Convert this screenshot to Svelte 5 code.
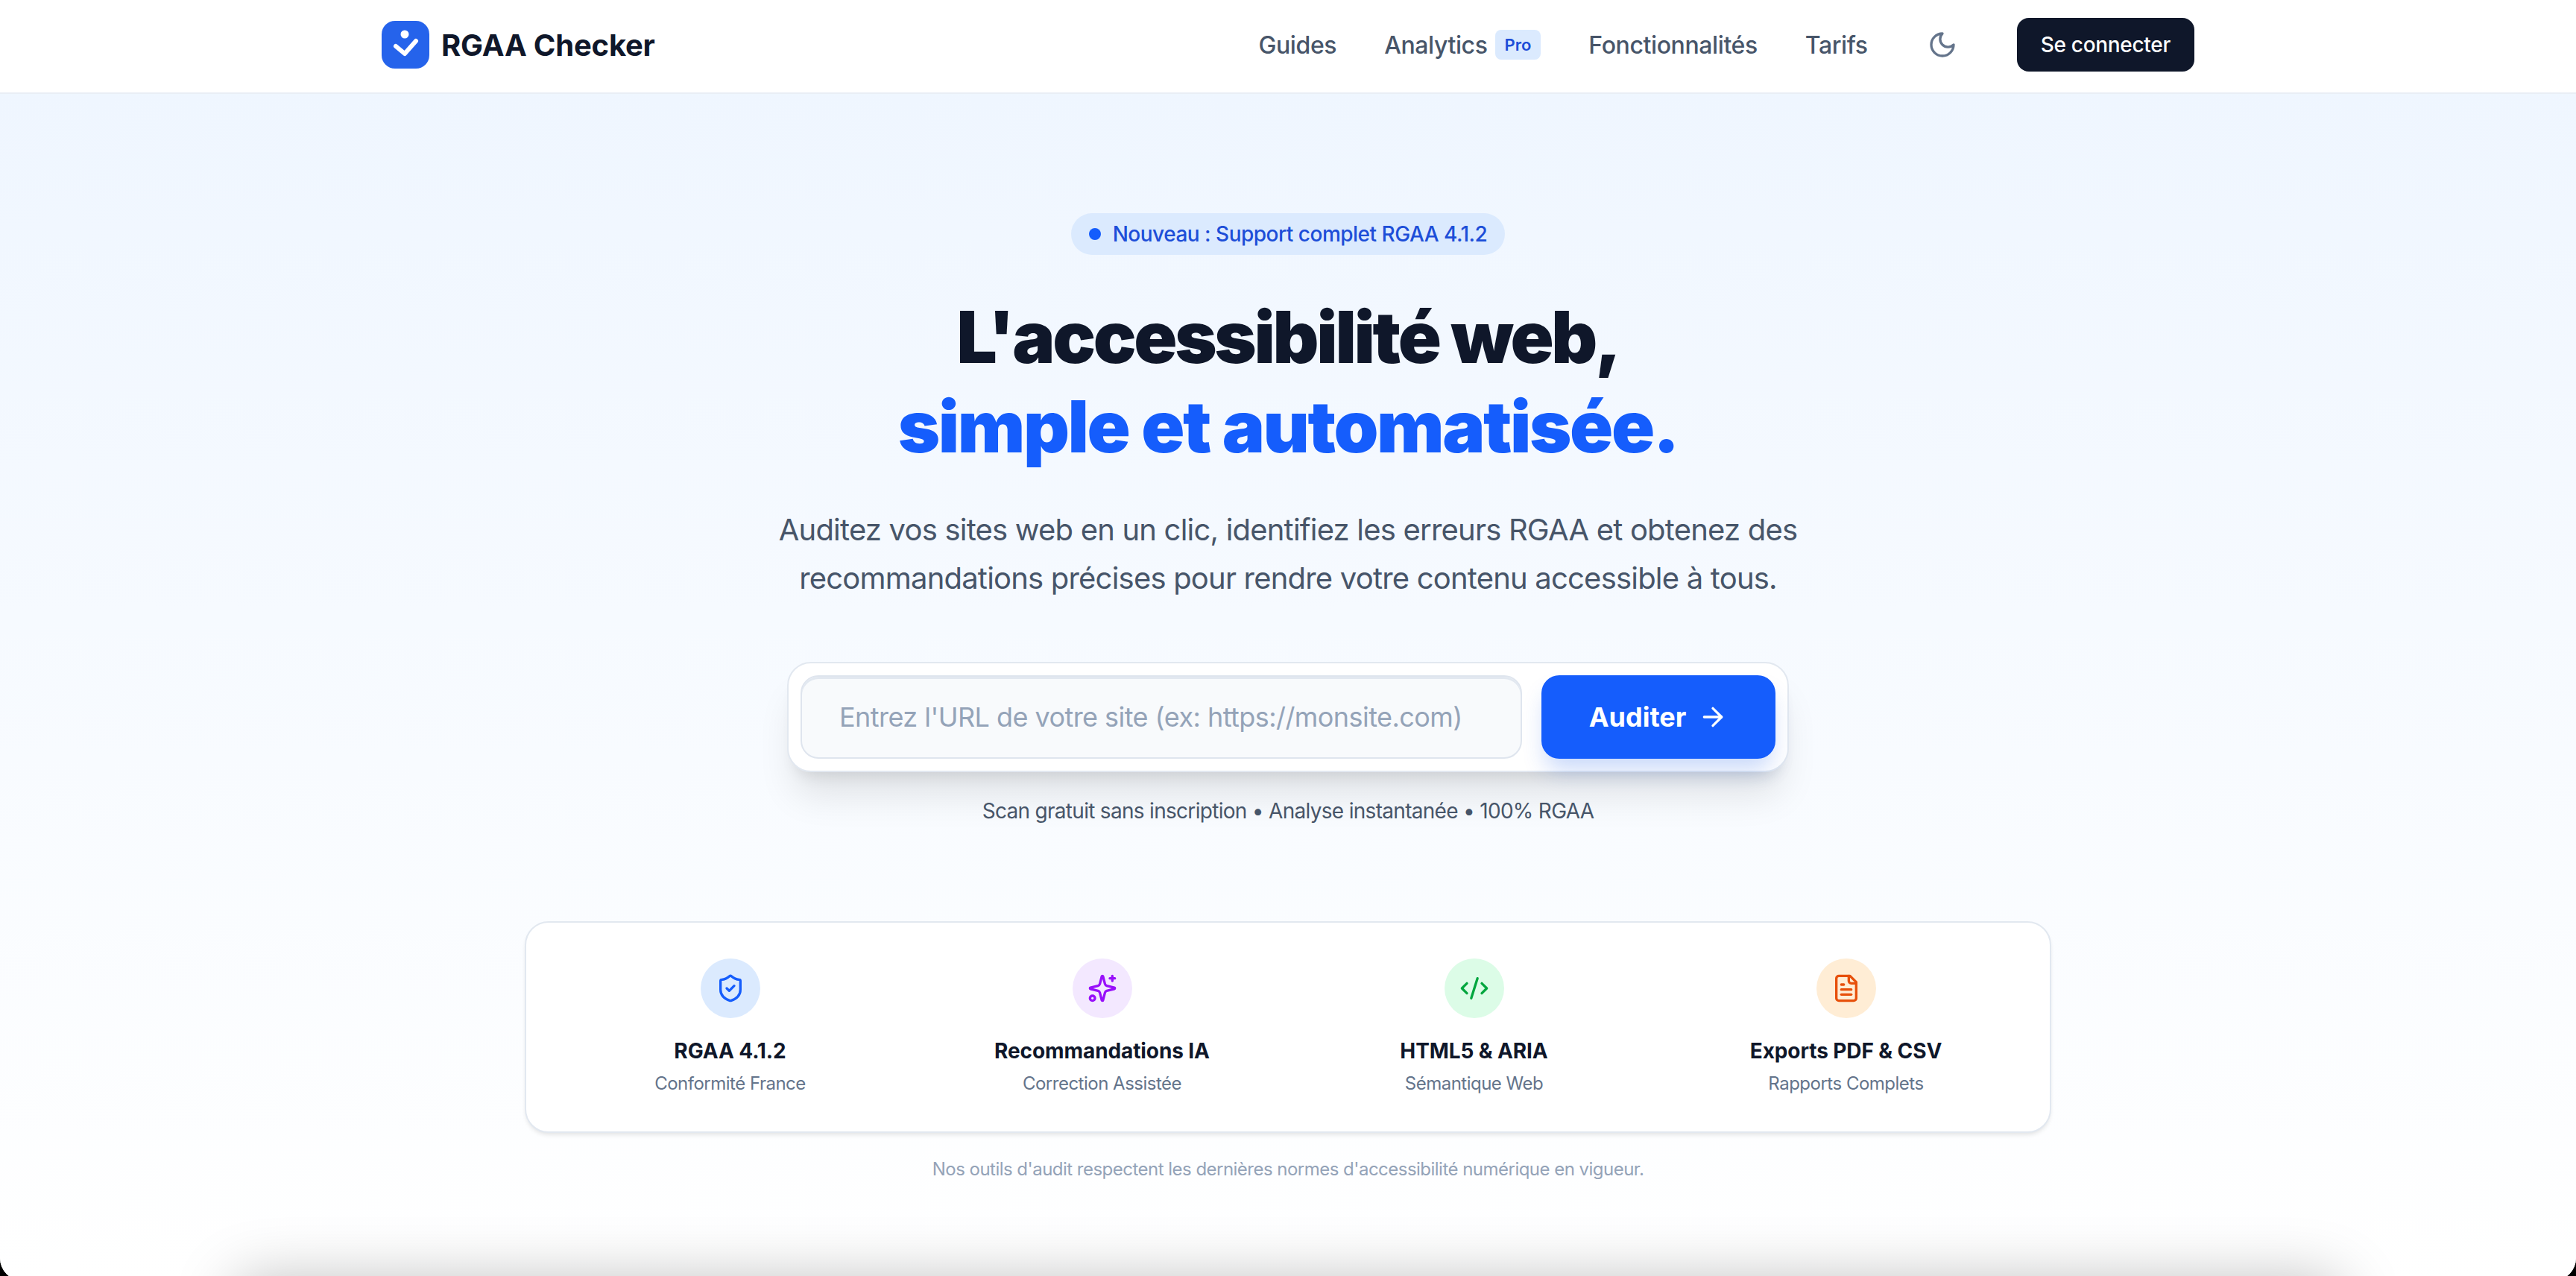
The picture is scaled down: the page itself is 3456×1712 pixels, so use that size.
<script lang="ts">
  const links = ["Guides", "Analytics", "Fonctionnalités", "Tarifs"];
  const features = [
    { title: "RGAA 4.1.2", sub: "Conformité France", kind: "blue" },
    { title: "Recommandations IA", sub: "Correction Assistée", kind: "purple" },
    { title: "HTML5 & ARIA", sub: "Sémantique Web", kind: "green" },
    { title: "Exports PDF & CSV", sub: "Rapports Complets", kind: "orange" },
  ];
</script>

<div class="frame">
  <div class="page">
    <header class="topbar">
      <div class="topbar-inner">
        <a class="brand" href="#top">
          <span class="brand-mark">
            <svg viewBox="0 0 64 64" width="64" height="64" aria-hidden="true">
              <circle cx="31" cy="18" r="5.5" fill="#fff" />
              <path d="M19 34l12 10 15-17" fill="none" stroke="#fff" stroke-width="6" stroke-linecap="round" stroke-linejoin="round" />
            </svg>
          </span>
          <span class="brand-name">RGAA Checker</span>
        </a>
        <nav class="nav">
          {#each links as link}
            <a href="#top" class="nav-link">
              {link}
              {#if link === "Analytics"}<span class="pro">Pro</span>{/if}
            </a>
          {/each}
          <button class="theme" aria-label="Thème sombre">
            <svg viewBox="0 0 24 24" width="40" height="40" fill="none" stroke="#64748b" stroke-width="2" stroke-linecap="round" stroke-linejoin="round" aria-hidden="true">
              <path d="M12 3a6 6 0 0 0 9 9 9 9 0 1 1-9-9Z" />
            </svg>
          </button>
          <button class="login">Se connecter</button>
        </nav>
      </div>
    </header>

    <main class="hero">
      <div class="tag"><span class="dot"></span>Nouveau : Support complet RGAA 4.1.2</div>
      <h1>L'accessibilité web,<br /><span class="accent">simple et automatisée.</span></h1>
      <p class="lead">Auditez vos sites web en un clic, identifiez les erreurs RGAA et obtenez des<br />recommandations précises pour rendre votre contenu accessible à tous.</p>

      <form class="scan" onsubmit={(e) => e.preventDefault()}>
        <input type="text" placeholder="Entrez l'URL de votre site (ex: https://monsite.com)" />
        <button class="go">
          Auditer
          <svg viewBox="0 0 24 24" width="40" height="40" fill="none" stroke="#fff" stroke-width="2" stroke-linecap="round" stroke-linejoin="round" aria-hidden="true">
            <path d="M5 12h14" />
            <path d="m12 5 7 7-7 7" />
          </svg>
        </button>
      </form>
      <p class="hint">Scan gratuit sans inscription • Analyse instantanée • 100% RGAA</p>

      <section class="features">
        {#each features as f}
          <div class="feature">
            <span class="bubble {f.kind}">
              <svg viewBox="0 0 24 24" width="40" height="40" fill="none" stroke="currentColor" stroke-width="2" stroke-linecap="round" stroke-linejoin="round" aria-hidden="true">
                {#if f.kind === "blue"}
                  <path d="M20 13c0 5-3.500 7.500-7.660 8.950a1 1 0 0 1-.67-.01C7.500 20.500 4 18 4 13V6a1 1 0 0 1 1-1c2 0 4.500-1.200 6.240-2.720a1.170 1.170 0 0 1 1.520 0C14.510 3.810 17 5 19 5a1 1 0 0 1 1 1z" />
                  <path d="m9 12 2 2 4-4" />
                {:else if f.kind === "purple"}
                  <path d="M9.937 15.500A2 2 0 0 0 8.500 14.063l-6.135-1.582a.5.5 0 0 1 0-.962L8.500 9.936A2 2 0 0 0 9.937 8.500l1.582-6.135a.5.5 0 0 1 .963 0L14.063 8.500A2 2 0 0 0 15.500 9.937l6.135 1.581a.5.5 0 0 1 0 .964L15.500 14.063a2 2 0 0 0-1.437 1.437l-1.582 6.135a.5.5 0 0 1-.963 0z" />
                  <path d="M20 2v4" />
                  <path d="M22 4h-4" />
                  <circle cx="4" cy="20" r="2" />
                {:else if f.kind === "green"}
                  <path d="m18 16 4-4-4-4" />
                  <path d="m6 8-4 4 4 4" />
                  <path d="m14.500 4-5 16" />
                {:else}
                  <path d="M15 2H6a2 2 0 0 0-2 2v16a2 2 0 0 0 2 2h12a2 2 0 0 0 2-2V7Z" />
                  <path d="M14 2v4a2 2 0 0 0 2 2h4" />
                  <path d="M10 9H8" />
                  <path d="M16 13H8" />
                  <path d="M16 17H8" />
                {/if}
              </svg>
            </span>
            <strong>{f.title}</strong>
            <span class="sub">{f.sub}</span>
          </div>
        {/each}
      </section>
      <p class="note">Nos outils d'audit respectent les dernières normes d'accessibilité numérique en vigueur.</p>

      <div class="next-card"></div>
    </main>
  </div>
</div>

<style>
  :global(body) {
    margin: 0;
    background: #000;
    font-family: Inter, "Liberation Sans", sans-serif;
  }
  /* the capture has rounded bottom corners on black */
  .frame {
    height: 1712px;
    overflow: hidden;
    background: #000;
  }
  .page {
    height: 1718px;
    overflow: hidden;
    background: #fff;
    border-radius: 0 0 30px 30px;
  }
  .topbar {
    height: 124px;
    background: #fff;
    border-bottom: 2px solid #e9eef5;
  }
  .topbar-inner {
    width: 2432px;
    height: 120px;
    margin: 0 auto;
    display: flex;
    align-items: center;
    justify-content: space-between;
  }
  .brand {
    display: flex;
    align-items: center;
    gap: 16px;
    text-decoration: none;
  }
  .brand-mark {
    width: 64px;
    height: 64px;
    border-radius: 18px;
    background: #2563eb;
    display: block;
  }
  .brand-mark svg {
    display: block;
  }
  .brand-name {
    font-size: 40px;
    font-weight: 700;
    letter-spacing: -0.2px;
    color: #0f172a;
  }
  .nav {
    display: flex;
    align-items: center;
    gap: 64px;
  }
  .nav-link {
    display: flex;
    align-items: center;
    gap: 10px;
    font-size: 32px;
    font-weight: 500;
    letter-spacing: -0.4px;
    color: #475569;
    text-decoration: none;
  }
  .pro {
    font-size: 22px;
    line-height: 32px;
    font-weight: 600;
    letter-spacing: 0;
    color: #1d4ed8;
    background: #dbeafe;
    border-radius: 8px;
    padding: 4px 13px;
  }
  .theme {
    width: 72px;
    height: 72px;
    padding: 16px;
    box-sizing: border-box;
    border: 0;
    background: none;
  }
  .theme svg {
    display: block;
  }
  .login {
    height: 72px;
    padding: 0 32px;
    border: 0;
    border-radius: 16px;
    background: #0f172a;
    color: #fff;
    font: 500 28px Inter, sans-serif;
    letter-spacing: -0.3px;
  }
  .hero {
    height: 1592px;
    display: flex;
    flex-direction: column;
    align-items: center;
    background: linear-gradient(180deg, #eff6ff 0%, #ffffff 100%);
    padding-top: 160px;
    box-sizing: border-box;
  }
  .hero > * {
    flex: none;
  }
  .tag {
    display: flex;
    align-items: center;
    gap: 16px;
    height: 56px;
    padding: 0 24px;
    border-radius: 28px;
    background: #dbeafe;
    color: #1d4ed8;
    font-size: 28px;
    font-weight: 500;
    letter-spacing: -0.5px;
  }
  .dot {
    width: 16px;
    height: 16px;
    border-radius: 50%;
    background: #155dfc;
  }
  h1 {
    margin: 50px 0 0;
    font-size: 96px;
    line-height: 120px;
    font-weight: 900;
    letter-spacing: -3.3px;
    text-align: center;
    color: #0f172a;
  }
  .accent {
    color: #155dfc;
    letter-spacing: -2.4px;
  }
  .lead {
    margin: 46px 0 0;
    font-size: 40px;
    line-height: 65px;
    letter-spacing: -0.8px;
    text-align: center;
    color: #475569;
  }
  .scan {
    margin-top: 80px;
    width: 1344px;
    height: 148px;
    box-sizing: border-box;
    padding: 16px;
    display: flex;
    gap: 26px;
    background: #fff;
    border: 2px solid #e2e8f0;
    border-radius: 32px;
    box-shadow: 0 40px 50px -10px rgba(0, 0, 0, 0.1), 0 16px 20px -12px rgba(0, 0, 0, 0.1);
  }
  input {
    flex: 1;
    min-width: 0;
    box-sizing: border-box;
    height: 112px;
    padding: 0 50px;
    border: 2px solid #dfe5ee;
    border-radius: 24px;
    background: #f8fafc;
    box-shadow: inset 0 3px 0 #e2e8f0;
    font: 400 36px Inter, sans-serif;
    letter-spacing: -0.55px;
    color: #0f172a;
  }
  input::placeholder {
    color: #94a3b8;
  }
  .go {
    width: 314px;
    height: 112px;
    display: flex;
    align-items: center;
    justify-content: center;
    gap: 16px;
    border: 0;
    border-radius: 24px;
    background: #155dfc;
    color: #fff;
    font: 700 36px Inter, sans-serif;
    box-shadow: 0 20px 30px -6px rgba(37, 99, 235, 0.25);
  }
  .hint {
    margin: 35px 0 0;
    font-size: 28px;
    letter-spacing: -0.7px;
    color: #475569;
  }
  .features {
    margin-top: 131px;
    width: 2048px;
    height: 284px;
    box-sizing: border-box;
    padding: 48px;
    display: grid;
    grid-template-columns: repeat(4, 1fr);
    gap: 48px;
    background: #fff;
    border: 2px solid #e2e8f0;
    border-radius: 32px;
    box-shadow: 0 4px 6px -2px rgba(0, 0, 0, 0.12);
  }
  .feature {
    display: flex;
    flex-direction: column;
    align-items: center;
  }
  .bubble {
    width: 80px;
    height: 80px;
    border-radius: 50%;
    display: flex;
    align-items: center;
    justify-content: center;
    margin-bottom: 24px;
  }
  .blue { background: #dbeafe; color: #155dfc; }
  .purple { background: #f3e8ff; color: #9810fa; }
  .green { background: #dcfce7; color: #00a63e; }
  .orange { background: #ffedd5; color: #e7500b; }
  .feature strong {
    font-size: 28px;
    line-height: 40px;
    font-weight: 700;
    letter-spacing: -0.1px;
    color: #0f172a;
  }
  .sub {
    margin-top: 8px;
    font-size: 24px;
    line-height: 32px;
    letter-spacing: -0.5px;
    color: #64748b;
  }
  .note {
    margin: 34px 0 0;
    font-size: 24px;
    letter-spacing: -0.52px;
    color: #94a3b8;
  }
  /* next section starts just under the fold, only its shadow shows */
  .next-card {
    margin-top: 133px;
    width: 2830px;
    height: 400px;
    border-radius: 32px;
    background: #fff;
    box-shadow: 0 0 80px rgba(0, 0, 0, 0.25);
  }
</style>
